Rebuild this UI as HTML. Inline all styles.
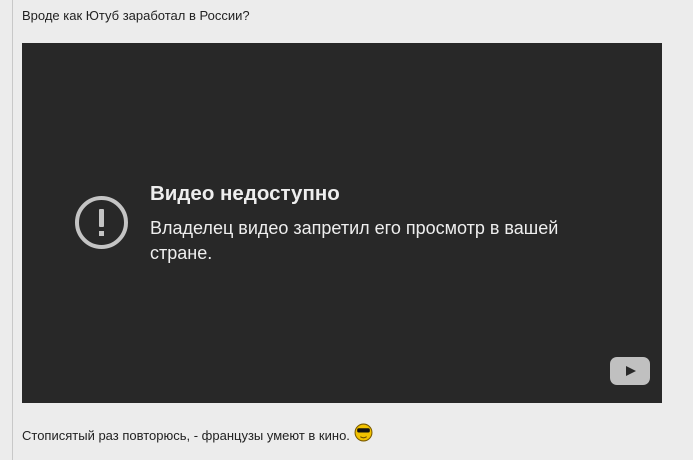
<!DOCTYPE html>
<html><head><meta charset="utf-8"><style>
body{margin:0;width:693px;height:460px;background:#ececec;position:relative;overflow:hidden;font-family:"Liberation Sans","DejaVu Sans",sans-serif}
.bar{position:absolute;left:12px;top:0;width:1px;height:460px;background:#c8c8c8}
.t{position:absolute;left:22px;font-size:13px;color:#222;white-space:nowrap}
.v{position:absolute;left:22px;top:43px;width:640px;height:360px;background:#282828}
.h{position:absolute;left:128px;top:139px;color:#eee;font-size:20.5px;font-weight:bold}
.s{position:absolute;left:128px;top:173px;color:#eee;font-size:18px;line-height:25px;width:460px}
</style></head><body>
<div class="bar"></div>
<div class="t" style="top:8px">Вроде как Ютуб заработал в России?</div>
<div class="v">
<svg style="position:absolute;left:52px;top:152px" width="56" height="56" viewBox="0 0 56 56"><circle cx="27.5" cy="27.5" r="24.5" fill="none" stroke="#c4c4c4" stroke-width="4"/><rect x="25" y="14" width="5" height="18" rx="1" fill="#c4c4c4"/><rect x="25" y="36" width="5" height="5" fill="#c4c4c4"/></svg>
<div class="h">Видео недоступно</div>
<div class="s">Владелец видео запретил его просмотр в вашей стране.</div>
<svg style="position:absolute;left:588px;top:314px" width="40" height="28" viewBox="0 0 40 28"><rect width="40" height="28" rx="7" fill="#c0c0c0"/><path d="M16 9L26 14L16 19Z" fill="#282828"/></svg>
</div>
<div class="t" style="top:428px">Стописятый раз повторюсь, - французы умеют в кино.</div>
<svg style="position:absolute;left:354px;top:423px" width="19" height="19" viewBox="0 0 18 18"><circle cx="9" cy="9" r="8" fill="#f2c200" stroke="#7a5a00"/><rect x="3" y="5" width="12" height="4" rx="1.5" fill="#111"/><path d="M6 13Q9 15 12 13" stroke="#6a4a00" fill="none"/></svg>
</body></html>
